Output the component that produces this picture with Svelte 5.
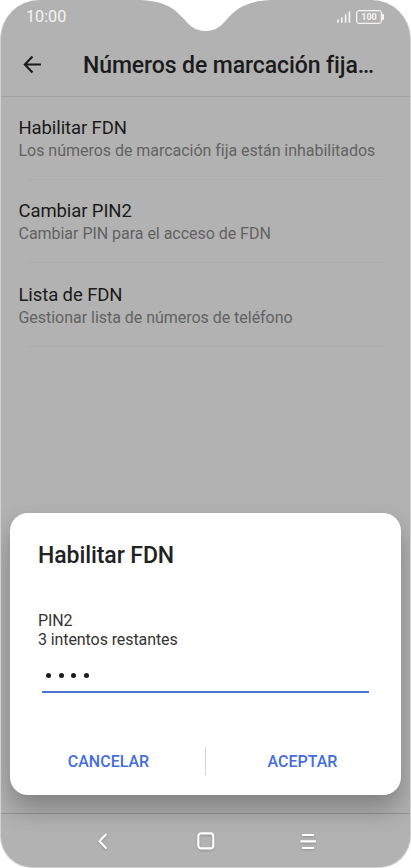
<script lang="ts">
    interface Option {
        title: string;
        summary: string;
    }

    const options: Option[] = [
        {
            title: "Habilitar FDN",
            summary: "Los números de marcación fija están inhabilitados",
        },
        {
            title: "Cambiar PIN2",
            summary: "Cambiar PIN para el acceso de FDN",
        },
        {
            title: "Lista de FDN",
            summary: "Gestionar lista de números de teléfono",
        },
    ];

    const pin = [1, 2, 3, 4];
</script>

<div class="phone">
    <div class="status-bar">
        <span class="clock">10:00</span>
        <svg class="signal" width="14" height="13" viewBox="0 0 14 13">
            <path
                d="M1 10V12M4.8 8V12M8.6 5.2V12M12.4 2V12"
                stroke="#f4f4f4"
                stroke-width="1.7"
                stroke-linecap="round"
            />
        </svg>
        <div class="battery"><span>100</span></div>
    </div>

    <header class="app-bar">
        <svg class="back" width="20" height="20" viewBox="0 0 20 20">
            <path
                d="M19 9.5H3M10.5 1.5L2.8 9.5L10.5 17.5"
                fill="none"
                stroke="#1b1b1b"
                stroke-width="2.1"
            />
        </svg>
        <h1>Números de marcación fija…</h1>
    </header>

    <main class="options">
        {#each options as option (option.title)}
            <div class="option">
                <div class="option-title">{option.title}</div>
                <div class="option-summary">{option.summary}</div>
            </div>
        {/each}
    </main>

    <nav class="nav-bar">
        <svg width="20" height="20" viewBox="0 0 20 20">
            <path d="M12.8 3.5L6.5 10.2L12.8 16.9" />
        </svg>
        <svg width="20" height="20" viewBox="0 0 20 20">
            <rect x="2.3" y="2.4" width="15" height="15" rx="3" />
        </svg>
        <svg width="20" height="20" viewBox="0 0 20 20">
            <path d="M3.8 4H14.2M2.2 10.4H16M3.8 17H14.2" />
        </svg>
    </nav>

    <svg class="notch" width="131" height="32" viewBox="0 0 131 32">
        <path
            d="M0 0C24 1 34 8 43 18C50 26 55 31 65.5 31C76 31 81 26 88 18C97 8 107 1 131 0Z"
            fill="#fff"
        />
    </svg>

    <div class="dialog" role="dialog" aria-labelledby="dialog-title">
        <h2 id="dialog-title">Habilitar FDN</h2>
        <p class="message">PIN2<br />3 intentos restantes</p>
        <div class="pin-field">
            {#each pin as digit (digit)}
                <span class="dot"></span>
            {/each}
        </div>
        <div class="actions">
            <button>CANCELAR</button>
            <span class="separator"></span>
            <button>ACEPTAR</button>
        </div>
    </div>
</div>

<style>
    :global(body) {
        background: #fff;
    }

    .phone {
        position: relative;
        display: flex;
        flex-direction: column;
        box-sizing: border-box;
        width: 411px;
        height: 868px;
        overflow: hidden;
        border: solid #d2d2d2;
        border-width: 0 1px 1px;
        border-radius: 39px 39px 32px 32px;
        background: #b2b2b2;
        font-family: Roboto, sans-serif;
        color: #1b1b1b;
    }

    .status-bar {
        display: flex;
        align-items: center;
        box-sizing: border-box;
        height: 33px;
        padding: 0 28px 0 25px;
        color: #f4f4f4;
    }

    .clock {
        margin-right: auto;
        font-size: 16.2px;
    }

    .signal {
        margin-right: 5px;
        fill: none;
    }

    .battery {
        position: relative;
        box-sizing: border-box;
        width: 26px;
        height: 14px;
        border: 1.5px solid #f4f4f4;
        border-radius: 3px;
        box-shadow: inset 0 0 0 1px #c4c4c4;
        font-size: 9px;
        font-weight: 700;
        line-height: 12px;
        text-align: center;
    }

    .battery::after {
        content: "";
        position: absolute;
        top: 3px;
        right: -3px;
        width: 2px;
        height: 6px;
        border-radius: 0 1px 1px 0;
        background: #f4f4f4;
    }

    .app-bar {
        display: flex;
        align-items: center;
        box-sizing: border-box;
        height: 64px;
        padding-left: 21px;
        border-bottom: 1px solid #a0a0a0;
    }

    .back {
        margin-right: 41px;
    }

    h1,
    h2 {
        margin: 0;
        font-size: 23px;
        font-weight: 500;
        letter-spacing: -0.08px;
        white-space: nowrap;
    }

    h1 {
        padding-top: 2px;
        letter-spacing: -0.1px;
    }

    .options {
        flex: 1;
    }

    .option {
        box-sizing: border-box;
        height: 83.3px;
        padding: 19px 17px 0 17.5px;
        background: linear-gradient(#acacac, #acacac) 27px 82px / 356px 1px no-repeat;
        white-space: nowrap;
    }

    .option-title {
        font-size: 18.5px;
        line-height: 24px;
        letter-spacing: -0.1px;
    }

    .option-summary {
        color: #626262;
        font-size: 16px;
        line-height: 22px;
        letter-spacing: -0.03px;
    }

    .nav-bar {
        display: flex;
        justify-content: center;
        align-items: center;
        gap: 83px;
        box-sizing: border-box;
        height: 54px;
        border-top: 1px solid #929292;
    }

    .nav-bar svg {
        fill: none;
        stroke: #fff;
        stroke-width: 2.1;
        stroke-linecap: round;
        filter: drop-shadow(0 1px 1px rgba(0, 0, 0, 0.2));
    }

    .notch {
        position: absolute;
        top: 0;
        left: 139px;
    }

    .dialog {
        position: absolute;
        top: 513px;
        left: 9px;
        display: flex;
        flex-direction: column;
        box-sizing: border-box;
        width: 391px;
        height: 282px;
        padding: 29px 28px 0;
        border-radius: 18px;
        background: #fff;
        box-shadow: 0 14px 26px rgba(0, 0, 0, 0.28);
    }

    h2 {
        line-height: 28px;
        color: #222;
    }

    .message {
        margin: 41px 0 0;
        font-size: 16px;
        line-height: 19px;
        letter-spacing: -0.09px;
        color: #333;
    }

    .pin-field {
        display: flex;
        gap: 7.6px;
        box-sizing: border-box;
        height: 44px;
        margin: 0 4px;
        padding: 24px 0 0 4px;
        border-bottom: 2px solid #4b73d0;
    }

    .dot {
        width: 5px;
        height: 5px;
        border-radius: 50%;
        background: #1b1b1b;
    }

    .actions {
        display: flex;
        align-items: center;
        height: 28px;
        margin: 54px -28px 0 -26px;
    }

    button {
        flex: 1;
        padding: 0;
        border: 0;
        background: none;
        color: #456ddb;
        font: 500 16px Roboto, sans-serif;
    }

    button:last-child {
        padding-right: 2px;
    }

    .separator {
        width: 1px;
        height: 28px;
        background: #d5d5d5;
    }
</style>
